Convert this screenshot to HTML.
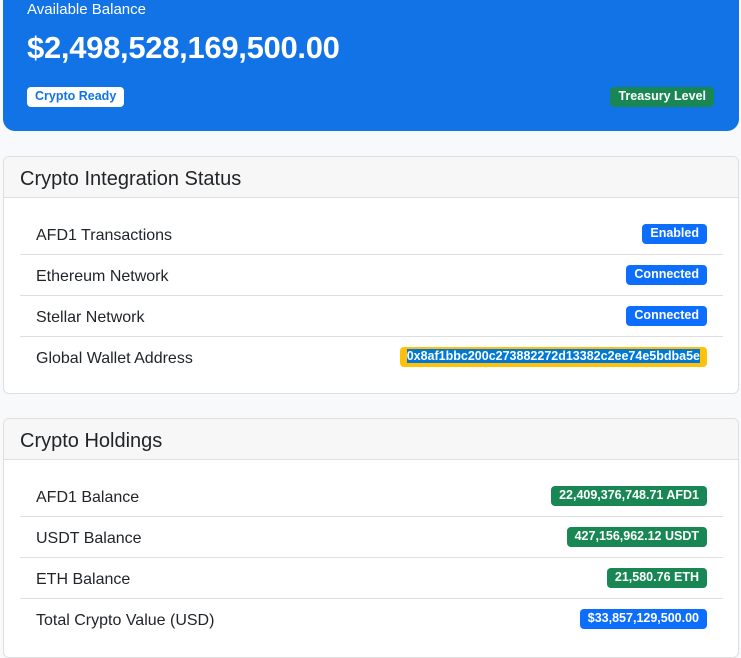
<!DOCTYPE html>
<html><head><style>
*{box-sizing:border-box;margin:0;padding:0}
body{width:741px;height:635px;overflow:hidden;background:#f8f9fa;font-family:"Liberation Sans",Arial,sans-serif;color:#212529;position:relative}
.hero{position:absolute;left:3px;top:-12px;width:736px;height:143px;background:#1173e6;border-radius:12px;color:#fff}
.lbl{position:absolute;left:24px;top:13px;font-size:15px}
.amt{position:absolute;left:24px;top:42px;font-size:31px;font-weight:bold;letter-spacing:-0.3px}
.b{display:inline-block;font-size:12.5px;font-weight:bold;padding:3px 8px 4px;border-radius:4px;line-height:13px;white-space:nowrap}
.card{position:absolute;left:3px;width:736px;background:#fff;border:1px solid #dfdfdf;border-radius:6px;overflow:hidden}
.hd{height:41px;background:#f7f7f7;border-bottom:1px solid #dfdfdf;font-size:20px;padding:11px 16px}
.row{position:absolute;left:16px;width:703px;height:41px;border-bottom:1px solid #dfdfdf;font-size:16px}
.row span.t{position:absolute;left:16px;top:13px}
.row .b{position:absolute;right:16px;top:10px}
.g{background:#198754;color:#fff}.bl{background:#0d6efd;color:#fff}
</style></head><body>
<div class="hero">
<div class="lbl">Available Balance</div>
<div class="amt">$2,498,528,169,500.00</div>
<span class="b" style="position:absolute;left:24px;top:99px;background:#fff;color:#1173e6">Crypto Ready</span>
<span class="b g" style="position:absolute;right:25px;top:99px">Treasury Level</span>
</div>
<div class="card" style="top:156px;height:238px">
<div class="hd">Crypto Integration Status</div>
<div class="row" style="top:57px"><span class="t">AFD1 Transactions</span><span class="b bl">Enabled</span></div>
<div class="row" style="top:98px"><span class="t">Ethereum Network</span><span class="b bl">Connected</span></div>
<div class="row" style="top:139px"><span class="t">Stellar Network</span><span class="b bl">Connected</span></div>
<div class="row" style="top:180px;border-bottom:none"><span class="t">Global Wallet Address</span><span class="b" style="background:#ffc107;padding:3px 7px 4px"><span style="background:#0078d7;color:#fff">0x8af1bbc200c273882272d13382c2ee74e5bdba5e</span></span></div>
</div>
<div class="card" style="top:418px;height:240px">
<div class="hd">Crypto Holdings</div>
<div class="row" style="top:57px"><span class="t">AFD1 Balance</span><span class="b g">22,409,376,748.71 AFD1</span></div>
<div class="row" style="top:98px"><span class="t">USDT Balance</span><span class="b g">427,156,962.12 USDT</span></div>
<div class="row" style="top:139px"><span class="t">ETH Balance</span><span class="b g">21,580.76 ETH</span></div>
<div class="row" style="top:180px;border-bottom:none"><span class="t">Total Crypto Value (USD)</span><span class="b bl">$33,857,129,500.00</span></div>
</div>
</body></html>
